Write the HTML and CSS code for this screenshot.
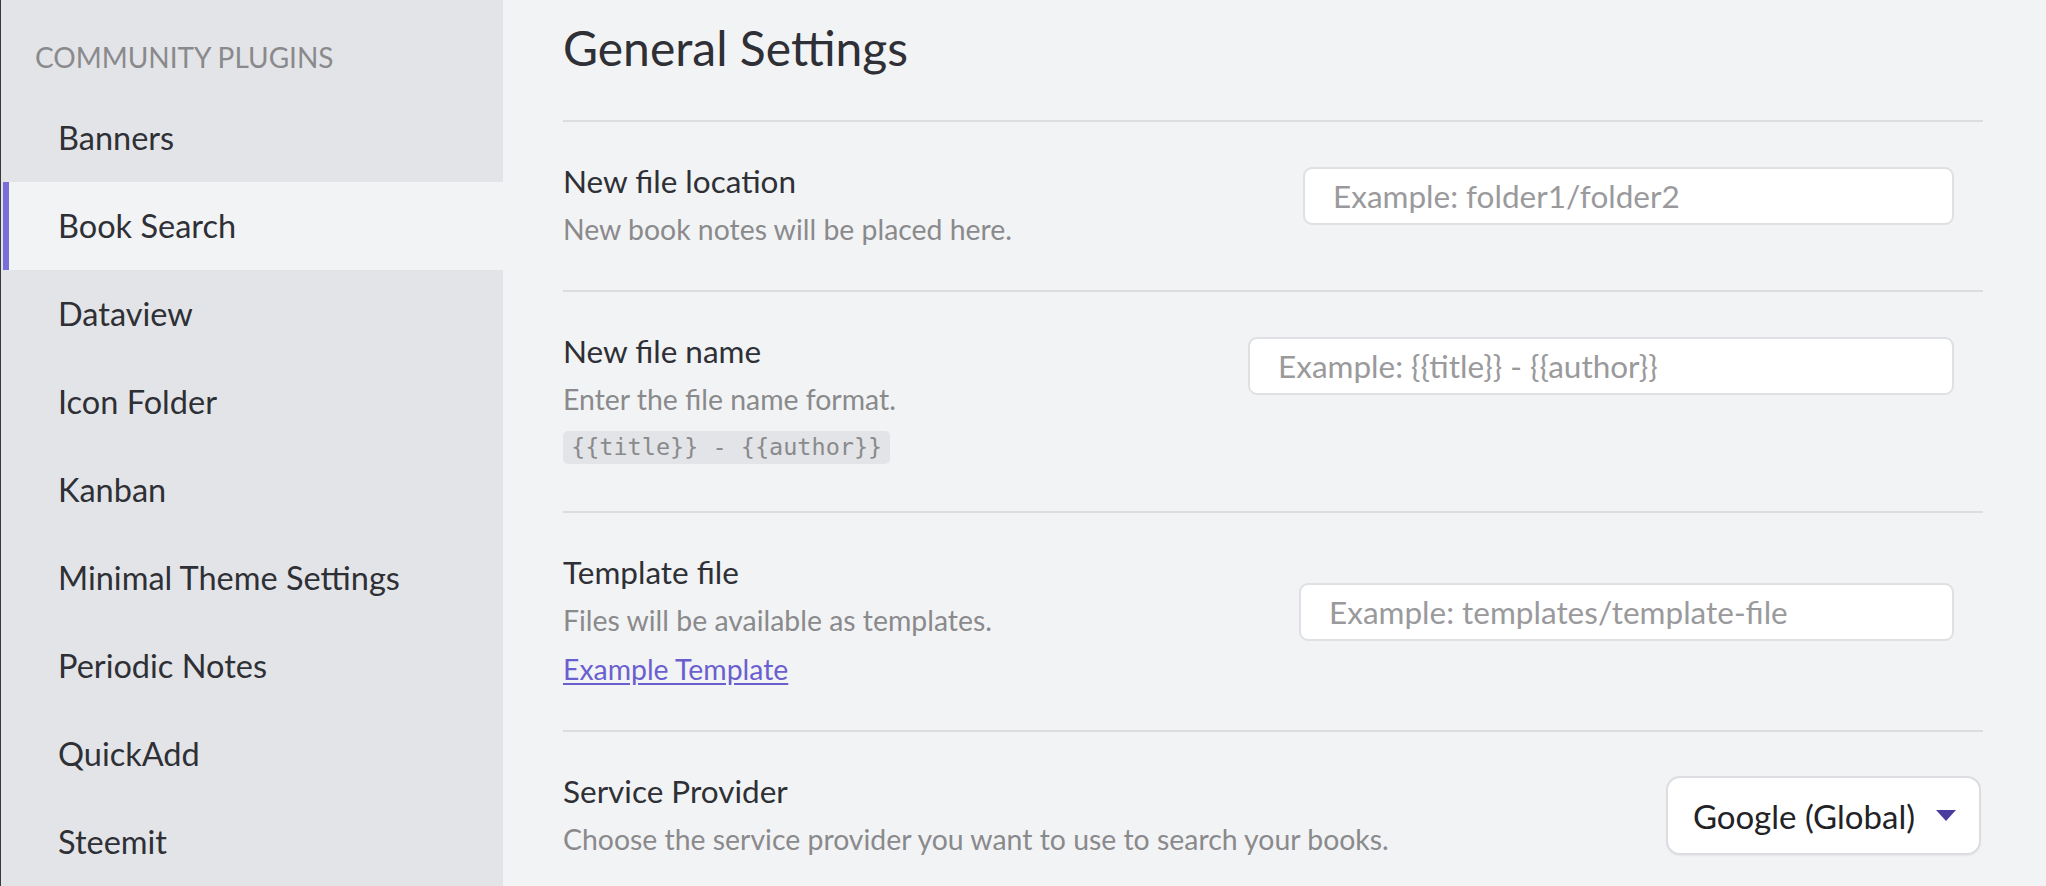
FILE: index.html
```html
<!DOCTYPE html>
<html lang="en">
<head>
<meta charset="utf-8">
<title>Book Search Settings</title>
<link rel="stylesheet" href="styles.css">
</head>
<body>
<div class="app">
  <nav class="sidebar">
    <div class="sidebar-header">Community plugins</div>
    <div class="nav-item">Banners</div>
    <div class="nav-item is-active">Book Search</div>
    <div class="nav-item">Dataview</div>
    <div class="nav-item">Icon Folder</div>
    <div class="nav-item">Kanban</div>
    <div class="nav-item">Minimal Theme Settings</div>
    <div class="nav-item">Periodic Notes</div>
    <div class="nav-item">QuickAdd</div>
    <div class="nav-item">Steemit</div>
  </nav>
  <main class="content">
    <h2 class="title">General Settings</h2>

    <div class="setting">
      <div class="setting-info">
        <div class="setting-name">New file location</div>
        <div class="setting-desc">New book notes will be placed here.</div>
      </div>
      <input class="text-input input-location" type="text" placeholder="Example: folder1/folder2">
    </div>

    <div class="setting">
      <div class="setting-info">
        <div class="setting-name">New file name</div>
        <div class="setting-desc">Enter the file name format.</div>
        <code class="code-chip">{{title}} - {{author}}</code>
      </div>
      <input class="text-input input-name" type="text" placeholder="Example: {{title}} - {{author}}">
    </div>

    <div class="setting">
      <div class="setting-info">
        <div class="setting-name">Template file</div>
        <div class="setting-desc">Files will be available as templates.</div>
        <a class="setting-link" href="#">Example Template</a>
      </div>
      <input class="text-input input-template" type="text" placeholder="Example: templates/template-file">
    </div>

    <div class="setting">
      <div class="setting-info">
        <div class="setting-name">Service Provider</div>
        <div class="setting-desc">Choose the service provider you want to use to search your books.</div>
      </div>
      <div class="dropdown">
        <span class="dropdown-value">Google (Global)</span>
        <svg class="dropdown-arrow" width="20" height="11" viewBox="0 0 20 11"><polygon points="0,0 20,0 10,11" fill="#483d9e"/></svg>
      </div>
    </div>
  </main>
</div>
</body>
</html>
```
FILE: styles.css
```css
* { box-sizing: border-box; }
html, body { margin: 0; padding: 0; height: 100%; overflow: hidden; }
body {
  font-family: Lato, "Noto Sans", sans-serif;
  color: #2e3035;
  background: #f2f3f5;
}
.app {
  display: flex;
  height: 100vh;
  border-left: 1px solid #3a3a3c;
}
.sidebar {
  width: 502px;
  flex: 0 0 502px;
  background: #e3e4e8;
  display: flex;
  flex-direction: column;
}
.sidebar-header {
  padding: 38px 0 18px 34px;
  line-height: 38px;
  font-size: 28px;
  text-transform: uppercase;
  color: #8a8a8c;
}
.nav-item {
  height: 88px;
  line-height: 88px;
  padding-left: 57px;
  font-size: 32.5px;
  color: #2e3035;
  white-space: nowrap;
}
.nav-item.is-active {
  background: #f2f3f5;
  margin-left: 2px;
  border-left: 6px solid #7a6fd8;
  padding-left: 49px;
}
.content {
  flex: 1;
  padding: 19px 63px 0 60px;
  background: #f2f3f5;
}
.title {
  margin: 0 0 43px;
  font-size: 48px;
  font-weight: 400;
  line-height: 58px;
  color: #2e3035;
}
.setting {
  display: flex;
  justify-content: space-between;
  align-items: flex-start;
  border-top: 2px solid #dcdde1;
  padding: 39px 0 43px;
}
.setting-info {
  display: flex;
  flex-direction: column;
  align-items: flex-start;
}
.setting-name {
  font-size: 31.5px;
  line-height: 40px;
  color: #2e3035;
}
.setting-desc {
  margin-top: 10px;
  font-size: 28.4px;
  line-height: 36px;
  color: #8a8a8c;
}
.code-chip {
  margin: 14px 0 4px;
  padding: 0 8px;
  height: 33px;
  line-height: 33px;
  font-family: "DejaVu Sans Mono", monospace;
  font-size: 23.5px;
  color: #8a8a8c;
  background: #e3e4e8;
  border-radius: 5px;
}
.setting-link {
  margin-top: 13px;
  font-size: 28.4px;
  line-height: 36px;
  color: #6b5fcf;
  text-decoration: underline;
  text-underline-offset: 3px;
}
.text-input {
  height: 58px;
  margin-right: 29px;
  padding: 0 28px;
  font-family: Lato, "Noto Sans", sans-serif;
  font-size: 31.5px;
  color: #2e3035;
  background: #ffffff;
  border: 2px solid #dfe0e3;
  border-radius: 9px;
  outline: none;
}
.text-input::placeholder { color: #9a9a9c; }
.input-location { width: 651px; margin-top: 6px; }
.input-name { width: 706px; margin-top: 6px; }
.input-template { width: 655px; margin-top: 31px; }
.dropdown {
  display: flex;
  align-items: center;
  gap: 21px;
  height: 79px;
  margin-top: 5px;
  margin-right: 2px;
  padding: 0 23px 0 25px;
  background: #ffffff;
  border: 2px solid #dcdde1;
  border-radius: 14px;
  box-shadow: 0 1px 2px rgba(0, 0, 0, 0.05);
}
.dropdown-value {
  font-size: 33px;
  color: #222326;
  white-space: nowrap;
}
.dropdown-arrow { display: block; }
```
